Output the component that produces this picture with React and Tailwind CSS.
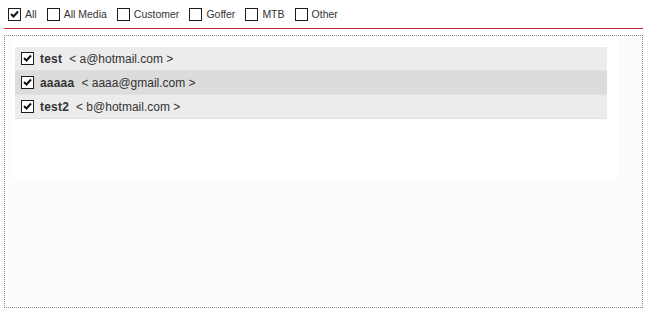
import React from "react";

function Box({ checked }) {
  return (
    <span className="inline-flex h-[13px] w-[13px] shrink-0 items-center justify-center border border-[#1c1c1c] bg-white">
      {checked && (
        <svg width="9" height="9" viewBox="0 0 9 9">
          <path d="M1 4 L3.5 6.5 L8 1.5" stroke="#111" strokeWidth="2" fill="none" />
        </svg>
      )}
    </span>
  );
}

const filters = [
  { label: "All", checked: true },
  { label: "All Media" },
  { label: "Customer" },
  { label: "Goffer" },
  { label: "MTB" },
  { label: "Other" },
];

const contacts = [
  { name: "test", email: "a@hotmail.com", bg: "bg-[#ececec]" },
  { name: "aaaaa", email: "aaaa@gmail.com", bg: "bg-[#dcdcdc]" },
  { name: "test2", email: "b@hotmail.com", bg: "bg-[#ececec]" },
];

export default function App() {
  return (
    <div className="h-[314px] w-[651px] bg-white font-['Liberation_Sans',Arial,sans-serif] text-[#333]">
      <div className="flex h-[28px] items-center gap-[10px] pl-[8px] pt-[1px] text-[10.5px]">
        {filters.map((f) => (
          <label key={f.label} className="flex items-center gap-[4px]">
            <Box checked={f.checked} />
            <span>{f.label}</span>
          </label>
        ))}
      </div>
      <div className="mx-[4px] w-[639px] border-t border-[#bb2a2a]" />
      <div className="ml-[4px] mt-[6px] h-[273px] w-[639px] border border-dotted border-[#888] bg-[#fcfcfc] pl-[7px] pt-[2px]">
        <div className="h-[141px] w-[606px] bg-white pl-[3px] pt-[9px]">
          {contacts.map((c) => (
            <div
              key={c.name}
              className={`flex h-[24px] w-[592px] items-center border-b border-[#e2e2e2] pl-[6px] text-[12px] ${c.bg}`}
            >
              <Box checked />
              <span className="ml-[6px] font-bold tracking-[0.2px]">{c.name}</span>
              <span className="ml-[7px]">&lt; {c.email} &gt;</span>
            </div>
          ))}
        </div>
      </div>
    </div>
  );
}
